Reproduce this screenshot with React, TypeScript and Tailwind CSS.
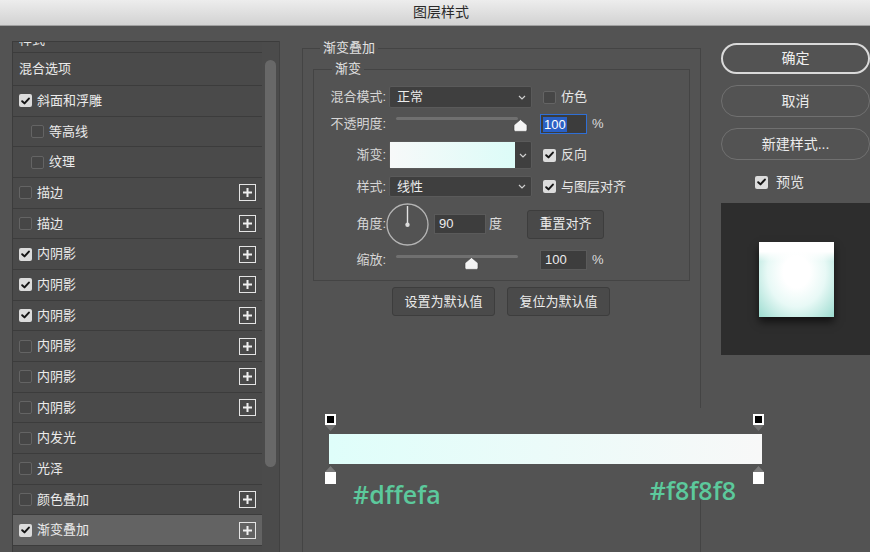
import React from "react";

const FONT = "[font-family:'Liberation_Sans','Noto_Sans_CJK_SC',sans-serif]";

function Check({ checked }: { checked: boolean }) {
  return checked ? (
    <span className="flex h-[13px] w-[13px] shrink-0 items-center justify-center rounded-[2px] bg-[#dcdcdc]">
      <svg width="9" height="8" viewBox="0 0 9 8">
        <path d="M1.2 4.2 L3.5 6.4 L7.9 1.6" fill="none" stroke="#151515" strokeWidth="2" strokeLinecap="round" strokeLinejoin="round" />
      </svg>
    </span>
  ) : (
    <span className="h-[13px] w-[13px] shrink-0 rounded-[2px] border border-[#646464] bg-[#464646]" />
  );
}

function PlusBox() {
  return (
    <span className="flex h-[17px] w-[17px] shrink-0 items-center justify-center border-[1.5px] border-[#e4e4e4]">
      <svg width="11" height="11" viewBox="0 0 11 11">
        <path d="M5.5 1 V10 M1 5.5 H10" stroke="#f0f0f0" strokeWidth="2" />
      </svg>
    </span>
  );
}

function Chevron() {
  return (
    <svg width="8" height="5" viewBox="0 0 8 5">
      <path d="M1 1 L4 4 L7 1" fill="none" stroke="#cfcfcf" strokeWidth="1.2" />
    </svg>
  );
}

function Thumb() {
  return (
    <svg width="15" height="13" viewBox="0 0 15 13">
      <path d="M7.5 0.6 L14 6 L14 11 Q14 12.4 12.6 12.4 L2.4 12.4 Q1 12.4 1 11 L1 6 Z" fill="#f4f4f4" stroke="#3a3a3a" strokeWidth="0.6" />
    </svg>
  );
}

type Row = { label: string; check: boolean; indent?: boolean; plus?: boolean; selected?: boolean };

const rows: Row[] = [
  { label: "斜面和浮雕", check: true },
  { label: "等高线", check: false, indent: true },
  { label: "纹理", check: false, indent: true },
  { label: "描边", check: false, plus: true },
  { label: "描边", check: false, plus: true },
  { label: "内阴影", check: true, plus: true },
  { label: "内阴影", check: true, plus: true },
  { label: "内阴影", check: true, plus: true },
  { label: "内阴影", check: false, plus: true },
  { label: "内阴影", check: false, plus: true },
  { label: "内阴影", check: false, plus: true },
  { label: "内发光", check: false },
  { label: "光泽", check: false },
  { label: "颜色叠加", check: false, plus: true },
  { label: "渐变叠加", check: true, plus: true, selected: true },
];

function ListRow({ r }: { r: Row }) {
  return (
    <div
      className={`flex h-[30.67px] items-center border-b border-[#3c3c3c] pr-[6px] ${r.indent ? "pl-[18px]" : "pl-[6px]"} ${
        r.selected ? "bg-[#636363]" : "bg-[#4a4a4a]"
      }`}
    >
      <Check checked={r.check} />
      <span className="ml-[5px] flex-1 text-[13px] text-[#ebebeb]">{r.label}</span>
      {r.plus && <PlusBox />}
    </div>
  );
}

function Label({ text }: { text: string }) {
  return <span className="w-[72px] shrink-0 text-right text-[13px] text-[#d6d6d6]">{text}</span>;
}

function Select({ value, h }: { value: string; h: string }) {
  return (
    <div className={`ml-[3px] flex ${h} w-[143px] items-center justify-between rounded-[2px] border border-[#5a5a5a] bg-[#3f3f3f] pl-[7px] pr-[5px]`}>
      <span className="text-[13px] text-[#ececec]">{value}</span>
      <Chevron />
    </div>
  );
}

function CheckLabel({ checked, text }: { checked: boolean; text: string }) {
  return (
    <div className="ml-[11px] flex items-center">
      <Check checked={checked} />
      <span className="ml-[5px] whitespace-nowrap text-[13px] text-[#e6e6e6]">{text}</span>
    </div>
  );
}

export default function App() {
  return (
    <div className={`flex h-[552px] w-[870px] flex-col overflow-hidden bg-[#535353] ${FONT} text-[13px] text-[#e4e4e4]`}>
      <div className="flex h-[26px] shrink-0 items-center justify-center border-b border-[#a0a0a0] bg-[linear-gradient(to_bottom,#ededed,#d2d2d2)] pl-[12px] text-[14px] text-[#2a2a2a]">
        图层样式
      </div>
      <div className="relative flex min-h-0 flex-1">
        {/* Left styles list */}
        <div className="ml-[12px] mt-[15px] flex h-[600px] w-[268px] shrink-0 border-r border-[#414141]">
          <div className="w-[250px] border-l border-t border-[#3c3c3c]">
            <div className="h-[11px] overflow-hidden border-b border-[#3c3c3c] bg-[#4a4a4a] pl-[6px]">
              <div className="-mt-[10px] leading-[16px] text-[#e6e6e6]">样式</div>
            </div>
            <div className="flex h-[33px] items-center border-b border-[#3c3c3c] bg-[#4a4a4a] pl-[6px] text-[#ebebeb]">混合选项</div>
            {rows.map((r, i) => (
              <ListRow key={i} r={r} />
            ))}
            <div className="h-[20px] bg-[#4a4a4a]" />
          </div>
          <div className="w-[17px] border-t border-[#3c3c3c] bg-[#4b4b4b]">
            <div className="ml-[3px] mt-[18px] h-[407px] w-[11px] rounded-full bg-[#686868]" />
          </div>
        </div>

        {/* Middle group */}
        <fieldset className="ml-[22px] mt-[14px] h-[560px] w-[399px] shrink-0 border border-[#444444]">
          <legend className="ml-[17px] px-[3px] text-[13px] leading-[16px] text-[#e2e2e2]">渐变叠加</legend>
          <fieldset className="ml-[10px] mt-[5px] w-[377px] border border-[#444444] pb-[10px]">
            <legend className="ml-[18px] px-[3px] text-[13px] leading-[16px] text-[#e2e2e2]">渐变</legend>

            {/* 混合模式 */}
            <div className="mt-[9px] flex h-[22px] items-center">
              <Label text="混合模式:" />
              <Select value="正常" h="h-[22px]" />
              <CheckLabel checked={false} text="仿色" />
            </div>

            {/* 不透明度 */}
            <div className="mt-[6px] flex h-[20px] items-center">
              <Label text="不透明度:" />
              <div className="relative ml-[3px] h-[20px] w-[143px]">
                <div className="absolute left-[7px] top-[3px] h-[3px] w-[122px] rounded-full bg-[#707070]" />
                <div className="absolute left-[124px] top-[5px] flex">
                  <Thumb />
                </div>
              </div>
              <div className="ml-[8px] flex h-[20px] w-[47px] items-center border-[1.5px] border-[#2f6fd6] bg-[#3c3c3c] pl-[2px]">
                <span className="bg-[#2a60c4] px-[1px] text-[13px] leading-[15px] text-white">100</span>
              </div>
              <span className="ml-[5px] text-[#dcdcdc]">%</span>
            </div>

            {/* 渐变 */}
            <div className="mt-[7px] flex h-[28px] items-center">
              <Label text="渐变:" />
              <div className="ml-[3px] flex h-[28px] w-[143px] rounded-[2px] border border-[#5a5a5a] bg-[#3f3f3f]">
                <div className="h-full w-[125px] bg-[linear-gradient(to_right,#f7f9f9,#dcfcf8)]" />
                <div className="flex flex-1 items-center justify-center">
                  <Chevron />
                </div>
              </div>
              <CheckLabel checked={true} text="反向" />
            </div>

            {/* 样式 */}
            <div className="mt-[7px] flex h-[21px] items-center">
              <Label text="样式:" />
              <Select value="线性" h="h-[21px]" />
              <CheckLabel checked={true} text="与图层对齐" />
            </div>

            {/* 角度 */}
            <div className="mt-[6px] flex h-[42px] items-center">
              <Label text="角度:" />
              <svg width="43" height="43" viewBox="0 0 43 43" className="shrink-0">
                <circle cx="21.5" cy="21.5" r="20.5" fill="none" stroke="#b4b4b4" strokeWidth="1.3" />
                <line x1="21.5" y1="3" x2="21.5" y2="21" stroke="#e2e2e2" strokeWidth="1.4" />
                <circle cx="21.5" cy="21.8" r="2.2" fill="#dcdcdc" />
              </svg>
              <div className="ml-[5px] flex h-[20px] w-[52px] items-center border border-[#5a5a5a] bg-[#3d3d3d] pl-[4px] text-[#ececec]">90</div>
              <span className="ml-[3px] text-[#dcdcdc]">度</span>
              <div className="ml-[25px] flex h-[29px] w-[77px] items-center justify-center rounded-[3px] border border-[#3d3d3d] bg-[#494949] text-[#ececec]">
                重置对齐
              </div>
            </div>

            {/* 缩放 */}
            <div className="mt-[5px] flex h-[20px] items-center">
              <Label text="缩放:" />
              <div className="relative ml-[3px] h-[20px] w-[143px]">
                <div className="absolute left-[7px] top-[5px] h-[3px] w-[122px] rounded-full bg-[#707070]" />
                <div className="absolute left-[75px] top-[7px] flex">
                  <Thumb />
                </div>
              </div>
              <div className="ml-[8px] flex h-[20px] w-[47px] items-center border border-[#5a5a5a] bg-[#3d3d3d] pl-[4px] text-[#ececec]">100</div>
              <span className="ml-[5px] text-[#dcdcdc]">%</span>
            </div>
          </fieldset>

          <div className="ml-[89px] mt-[6px] flex gap-[12px]">
            <div className="flex h-[29px] w-[103px] items-center justify-center rounded-[3px] border border-[#3d3d3d] bg-[#4a4a4a] text-[#ececec]">
              设置为默认值
            </div>
            <div className="flex h-[29px] w-[103px] items-center justify-center rounded-[3px] border border-[#3d3d3d] bg-[#4a4a4a] text-[#ececec]">
              复位为默认值
            </div>
          </div>
        </fieldset>

        {/* Right column */}
        <div className="ml-[20px] mt-[17px] flex w-[149px] shrink-0 flex-col">
          <div className="flex h-[31px] items-center justify-center rounded-full border-2 border-[#dadada] text-[14px] text-[#f0f0f0]">确定</div>
          <div className="mt-[11px] flex h-[32px] items-center justify-center rounded-full border border-[#707070] text-[14px] text-[#ececec]">取消</div>
          <div className="mt-[11px] flex h-[32px] items-center justify-center rounded-full border border-[#707070] text-[14px] text-[#ececec]">新建样式...</div>
          <div className="mt-[15px] flex h-[14px] items-center pl-[34px]">
            <Check checked={true} />
            <span className="ml-[8px] text-[14px] text-[#e8e8e8]">预览</span>
          </div>
          <div className="mt-[14px] h-[152px] bg-[#2d2d2d] pl-[38px] pt-[39px]">
            <div className="h-[75px] w-[75px] bg-[linear-gradient(to_bottom,#ffffff_0%,#ffffff_13%,rgba(255,255,255,0)_26%),radial-gradient(ellipse_at_50%_40%,#ffffff_25%,#e8f9f6_55%,#9cdcd0_100%)] shadow-[0_5px_8px_rgba(0,0,0,0.6)]" />
          </div>
        </div>

        {/* Gradient editor overlay */}
        <div className="absolute left-[322px] top-[382px] h-[92px] w-[446px] bg-[#535353] pl-[3px] pr-[4px] pt-[6px]">
          <div className="flex justify-between">
            {[0, 1].map((k) => (
              <div key={k} className="flex w-[11px] flex-col items-center">
                <div className="h-[11px] w-[11px] border-2 border-white bg-black" />
                <svg width="11" height="6" viewBox="0 0 11 6">
                  <path d="M0 0 H11 L5.5 6 Z" fill="#707070" />
                </svg>
              </div>
            ))}
          </div>
          <div className="ml-[4px] mr-[2px] mt-[3px] h-[30px] bg-[linear-gradient(to_right,#dffefa,#f8f8f8)]" />
          <div className="mt-[2px] flex justify-between">
            {[0, 1].map((k) => (
              <div key={k} className="flex w-[11px] flex-col items-center">
                <svg width="11" height="6" viewBox="0 0 11 6">
                  <path d="M0 6 H11 L5.5 0 Z" fill="#7a7a7a" />
                </svg>
                <div className="h-[12px] w-[11px] bg-white" />
              </div>
            ))}
          </div>
          <span className="absolute left-[31px] top-[74px] text-[25px] font-semibold leading-[25px] text-[#5cc99c] [font-family:'Open_Sans',sans-serif]">
            #dffefa
          </span>
          <span className="absolute right-[32px] top-[70px] text-[25px] font-semibold leading-[25px] text-[#5cc99c] [font-family:'Open_Sans',sans-serif]">
            #f8f8f8
          </span>
        </div>
      </div>
    </div>
  );
}
